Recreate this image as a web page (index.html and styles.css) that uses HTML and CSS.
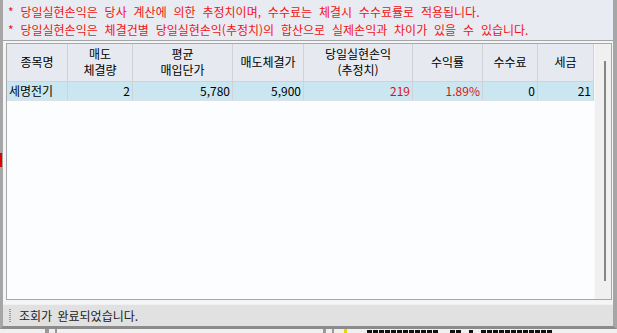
FILE: index.html
```html
<!DOCTYPE html>
<html lang="ko">
<head>
<meta charset="utf-8">
<title>당일실현손익</title>
<link rel="stylesheet" href="styles.css">
</head>
<body>
<div class="window">
  <div class="notice">
    <div class="notice-line">* 당일실현손익은 당사 계산에 의한 추정치이며, 수수료는 체결시 수수료률로 적용됩니다.</div>
    <div class="notice-line">* 당일실현손익은 체결건별 당일실현손익(추정치)의 합산으로 실제손익과 차이가 있을 수 있습니다.</div>
  </div>
  <div class="grid-wrap">
    <div class="grid">
      <div class="table">
        <div class="row head">
          <div class="cell">종목명</div>
          <div class="cell">매도<br>체결량</div>
          <div class="cell">평균<br>매입단가</div>
          <div class="cell">매도체결가</div>
          <div class="cell">당일실현손익<br>(추정치)</div>
          <div class="cell">수익률</div>
          <div class="cell">수수료</div>
          <div class="cell">세금</div>
        </div>
        <div class="row data">
          <div class="cell left">세명전기</div>
          <div class="cell num">2</div>
          <div class="cell num">5,780</div>
          <div class="cell num">5,900</div>
          <div class="cell num red">219</div>
          <div class="cell num red">1.89%</div>
          <div class="cell num">0</div>
          <div class="cell num">21</div>
        </div>
      </div>
      <div class="scrollbar"><div class="thumb"></div></div>
    </div>
  </div>
  <div class="status">
    <span class="grip"></span>
    <span class="status-text">조회가 완료되었습니다.</span>
  </div>
</div>
<div class="under">
  <span class="mk g" style="margin-left:45px;width:4px"></span>
  <span class="mk g" style="margin-left:6px;width:2px"></span>
  <span class="mk g" style="margin-left:266px;width:3px"></span>
  <span class="mk g" style="margin-left:6px;width:2px"></span>
  <span class="mk y" style="margin-left:10px;width:3px"></span>
  <span class="mk" style="margin-left:20px;width:71px"></span>
  <span class="mk" style="margin-left:12px;width:11px"></span>
  <span class="mk" style="margin-left:8px;width:4px"></span>
  <span class="mk" style="margin-left:8px;width:71px"></span>
</div>
<div class="edge-red"></div>
</body>
</html>
```
FILE: styles.css
```css
* { box-sizing: border-box; }
html, body { margin: 0; padding: 0; }
body {
  width: 617px;
  height: 333px;
  overflow: hidden;
  background: #eeeeee;
  font-family: "Noto Sans CJK KR", "Noto Sans", sans-serif;
  font-size: 12px;
  position: relative;
}
.window {
  width: 617px;
  height: 329px;
  border-left: 3px solid #a6a6a6;
  border-right: 4px solid #a6a6a6;
  border-bottom: 3px solid #8c8c8c;
  display: flex;
  flex-direction: column;
  background: #f4f5f7;
}
.notice {
  height: 41px;
  background: #e8ebf1;
  border-bottom: 1px solid #a4a4a4;
  padding: 3px 0 0 5px;
  color: #f01414;
  word-spacing: 3.5px;
}
.notice-line {
  height: 18px;
  line-height: 18px;
  white-space: nowrap;
}
.grid-wrap {
  padding: 2px 1px 0 3px;
}
.grid {
  height: 257px;
  border: 1px solid #a8a8a8;
  background: #fcfdff;
  display: flex;
}
.table {
  width: 587px;
}
.row {
  display: grid;
  grid-template-columns: 61px 65px 100px 71px 109px 70px 55px 56px;
}
.cell {
  border-right: 1px solid #cfd2d6;
  white-space: nowrap;
}
.head .cell {
  height: 38px;
  background: #e6eaf0;
  border-bottom: 1px solid #cfd2d6;
  display: flex;
  align-items: center;
  justify-content: center;
  text-align: center;
  line-height: 16px;
  color: #000;
  padding-bottom: 1px;
  word-spacing: 2px;
}
.data .cell {
  height: 19px;
  line-height: 18px;
  background: #c9e6f1;
  border-bottom: 1px solid #dde2e6;
  color: #000;
}
.data .left { padding-left: 2px; }
.data .num { text-align: right; padding-right: 2px; }
.data .red { color: #e01010; }
.scrollbar {
  width: 18px;
  background: #f0f0f0;
  position: relative;
  border-left: 1px solid #f8f8f8;
}
.thumb {
  position: absolute;
  left: 9px;
  top: 17px;
  width: 2px;
  height: 220px;
  background: #858585;
}
.status {
  margin-top: 4px;
  flex: 1;
  background: #e1e1e1;
  border-top: 1px solid #f0f0f0;
  display: flex;
  align-items: center;
  padding-left: 6px;
}
.grip {
  width: 2px;
  height: 14px;
  background: repeating-linear-gradient(to bottom, #9a9a9a 0 1px, transparent 1px 2px);
  margin-right: 8px;
}
.status-text {
  color: #222;
  line-height: 16px;
  margin-top: 1px;
  word-spacing: 2px;
}
.under {
  height: 4px;
  display: flex;
  align-items: flex-end;
  background: #f0f0f0;
}
.mk {
  height: 3px;
  background: repeating-linear-gradient(to right, #111 0 5px, #eee 5px 6px);
}
.mk.g { background: #9a9a9a; height: 4px; }
.mk.y { background: #e8d800; height: 4px; }
.edge-red {
  position: absolute;
  left: 0;
  top: 153px;
  width: 2px;
  height: 14px;
  background: #e00000;
}
```
